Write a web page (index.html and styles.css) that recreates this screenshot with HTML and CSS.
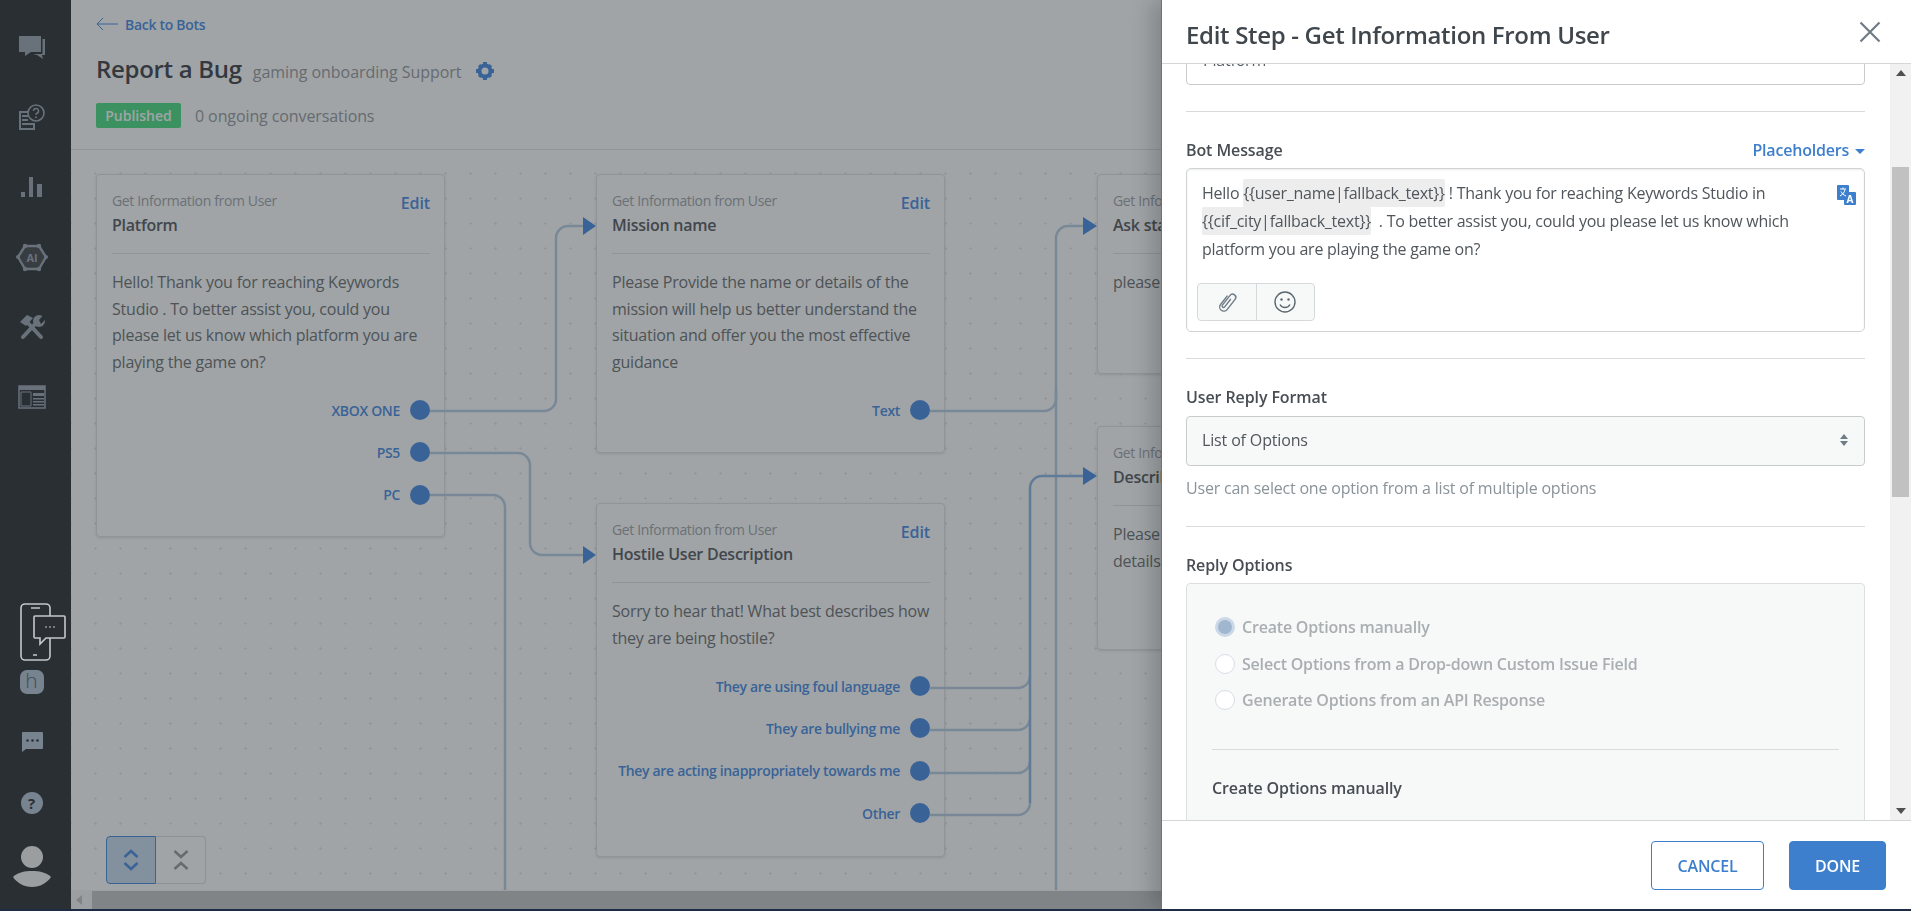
FILE: index.html
```html
<!DOCTYPE html>
<html lang="en">
<head>
  <meta charset="UTF-8">
  <title>Edit Step</title>
  <link rel="stylesheet" href="styles.css">
</head>
<body>

<div class="app">
  <!-- SIDEBAR -->
  <nav class="sidebar">
    <div class="nav-top">
      <a class="nav-item">
        <svg width="28" height="25" viewBox="0 0 28 25"><path d="M1 1h22v16H13l-6 4v-4H1z" fill="#a0a8b2"/><path d="M24.500 4H27v16h-3l1 4-6-4-4-1h9a1 1 0 0 0 .500-1z" fill="#a0a8b2"/></svg>
      </a>
      <a class="nav-item">
        <svg width="28" height="26" viewBox="0 0 28 26"><path d="M1 7h9v2H3v15h12v-3h2v5H1z" fill="#a0a8b2"/><path d="M4 11h6v2H4zM4 15h6v2H4zM4 19h13v2H4z" fill="#a0a8b2"/><circle cx="18" cy="9" r="8" fill="#353639" stroke="#a0a8b2" stroke-width="1.600"/><path d="M15.500 7a2.500 2.500 0 1 1 3.400 2.300c-.7.3-.9.7-.9 1.700" fill="none" stroke="#a0a8b2" stroke-width="1.500"/><circle cx="18" cy="13.300" r="1" fill="#a0a8b2"/></svg>
      </a>
      <a class="nav-item">
        <svg width="24" height="22" viewBox="0 0 24 22"><path d="M1 16h4v5H1zM9 1h4v20H9zM17 8h5v13h-5z" fill="#a0a8b2"/></svg>
      </a>
      <a class="nav-item">
        <svg width="32" height="29" viewBox="0 0 32 29"><path d="M9 3h14l7 11-7 12H9L2 14z" fill="#4d4e52" stroke="#a0a8b2" stroke-width="2.400" stroke-linejoin="round"/><circle cx="9" cy="3" r="2.200" fill="#a0a8b2"/><circle cx="23" cy="3" r="2.200" fill="#a0a8b2"/><circle cx="30" cy="14" r="2" fill="#a0a8b2"/><circle cx="2" cy="14" r="2" fill="#a0a8b2"/><circle cx="9" cy="26" r="2.200" fill="#a0a8b2"/><circle cx="23" cy="26" r="2.200" fill="#a0a8b2"/><text class="ai-text" x="16" y="18.500">AI</text></svg>
      </a>
      <a class="nav-item">
        <svg width="28" height="26" viewBox="0 0 28 26"><path d="M5 23 19 8M23 23 9 8" stroke="#a0a8b2" stroke-width="4" stroke-linecap="round"/><path d="M2 8l7-7 6 3-7 8z" fill="#a0a8b2"/><circle cx="21" cy="7" r="6" fill="#a0a8b2"/><path d="M21 6l6-7 3 4-7 7z" fill="#353639"/></svg>
      </a>
      <a class="nav-item">
        <svg width="28" height="24" viewBox="0 0 28 24"><path d="M1 1h26v22H1z" fill="none" stroke="#a0a8b2" stroke-width="1.500"/><path d="M1 1h26v4H1z" fill="#a0a8b2"/><path d="M3 7h10v14H3z" fill="#353639" stroke="#a0a8b2" stroke-width="1"/><path d="M15 8h11v3H15zM15 13h11v1.500H15zM15 16h11v1.500H15zM15 19h11v1.500H15z" fill="#a0a8b2"/></svg>
      </a>
    </div>
    <div class="nav-bottom">
      <div class="phone-widget">
        <svg width="46" height="58" viewBox="0 0 46 58"><rect x="1" y="1" width="29" height="56" rx="4" fill="none" stroke="#c4c8cc" stroke-width="1.600"/><path d="M11 5h9M13 52h4" stroke="#c4c8cc" stroke-width="1.600"/><path d="M15 13h29a1 1 0 0 1 1 1v20a1 1 0 0 1-1 1H26l-6 6v-6h-5a1 1 0 0 1-1-1V14a1 1 0 0 1 1-1z" fill="#2b2f34" stroke="#c4c8cc" stroke-width="1.600"/><path d="M25 24h2M29 24h2M33 24h2" stroke="#c4c8cc" stroke-width="1.200"/></svg>
      </div>
      <div class="h-badge">h</div>
      <div class="chat-mini">
        <svg width="22" height="22" viewBox="0 0 22 22"><path d="M2 1h19a1 1 0 0 1 1 1v15a1 1 0 0 1-1 1H5l-4 3V2a1 1 0 0 1 1-1z" fill="#b8c8d6"/><circle cx="6.500" cy="9.500" r="1.300" fill="#353639"/><circle cx="11.500" cy="9.500" r="1.300" fill="#353639"/><circle cx="16.500" cy="9.500" r="1.300" fill="#353639"/></svg>
      </div>
      <div class="help-badge">?</div>
      <div class="avatar">
        <svg width="40" height="42" viewBox="0 0 40 42"><circle cx="20" cy="11" r="11" fill="#f5f5f5"/><path d="M1 31c5-5 12-6 19-6s14 1 19 6c-4 6-11 10-19 10S5 37 1 31z" fill="#f5f5f5"/></svg>
      </div>
    </div>
  </nav>

  <div class="main">
    <header class="page-header">
      <a class="back-link">
        <svg width="22" height="14" viewBox="0 0 22 14"><path d="M22 7H1M7 1 1 7l6 6" fill="none" stroke="#4f8fe4" stroke-width="1"/></svg>
        Back to Bots
      </a>
      <div class="title-row">
        <h1>Report a Bug</h1>
        <span class="subtitle">gaming onboarding Support</span>
        <svg class="gear" width="18" height="18" viewBox="0 0 18 18"><circle cx="9" cy="9" r="5.500" fill="none" stroke="#4f8fe4" stroke-width="4"/><path d="M7 0h4v3H7zM7 15h4v3H7zM0 7h3v4H0zM15 7h3v4h-3zM2 4.200 4.200 2l2 2L4 6.200zM16 4.200 13.800 2l-2 2L14 6.200zM2 13.800 4.200 16l2-2L4 11.800zM16 13.800 13.800 16l-2-2 2.200-2.200z" fill="#4f8fe4"/></svg>
      </div>
      <div class="status-row">
        <span class="badge">Published</span>
        <span class="ongoing">0 ongoing conversations</span>
      </div>
    </header>

    <div class="canvas">
      <div class="card card-a">
        <div class="card-head">
          <div class="card-kind">Get Information from User</div>
          <div class="card-name">Platform</div>
          <a class="card-edit">Edit</a>
        </div>
        <p class="card-text">Hello! Thank you for reaching Keywords Studio . To better assist you, could you please let us know which platform you are playing the game on?</p>
        <div class="outs">
          <div class="out"><span>XBOX ONE</span><i></i></div>
          <div class="out"><span>PS5</span><i></i></div>
          <div class="out"><span>PC</span><i></i></div>
        </div>
      </div>

      <div class="card card-b">
        <div class="card-head">
          <div class="card-kind">Get Information from User</div>
          <div class="card-name">Mission name</div>
          <a class="card-edit">Edit</a>
        </div>
        <p class="card-text">Please Provide the name or details of the mission will help us better understand the situation and offer you the most effective guidance</p>
        <div class="outs">
          <div class="out"><span>Text</span><i></i></div>
        </div>
      </div>

      <div class="card card-c">
        <div class="card-head">
          <div class="card-kind">Get Information from User</div>
          <div class="card-name">Hostile User Description</div>
          <a class="card-edit">Edit</a>
        </div>
        <p class="card-text">Sorry to hear that! What best describes how they are being hostile?</p>
        <div class="outs">
          <div class="out"><span>They are using foul language</span><i></i></div>
          <div class="out"><span>They are bullying me</span><i></i></div>
          <div class="out"><span>They are acting inappropriately towards me</span><i></i></div>
          <div class="out"><span>Other</span><i></i></div>
        </div>
      </div>

      <div class="card card-d">
        <div class="card-head">
          <div class="card-kind">Get Information from User</div>
          <div class="card-name">Ask status</div>
        </div>
        <p class="card-text">please</p>
      </div>

      <div class="card card-e">
        <div class="card-head">
          <div class="card-kind">Get Information from User</div>
          <div class="card-name">Describe</div>
        </div>
        <p class="card-text">Please<br>details</p>
      </div>

      <!-- connectors, drawn in page coordinates -->
      <svg class="wires" width="1840" height="740" viewBox="71 150 1840 740">
        <g fill="none" stroke="#bccfe2" stroke-width="2.500">
          <path d="M430 411h114a12 12 0 0 0 12-12V238a12 12 0 0 1 12-12h16"/>
          <path d="M430 453h88a12 12 0 0 1 12 12v78a12 12 0 0 0 12 12h42"/>
          <path d="M430 495h63a12 12 0 0 1 12 12v383"/>
          <path d="M930 411h114a12 12 0 0 0 12-12V238a12 12 0 0 1 12-12h16"/>
          <path d="M1056 390v500"/>
          <path d="M930 688h88a12 12 0 0 0 12-12"/>
          <path d="M930 730h88a12 12 0 0 0 12-12"/>
          <path d="M930 773h88a12 12 0 0 0 12-12"/>
          <path d="M930 815h88a12 12 0 0 0 12-12"/>
        </g>
        <path d="M1030 803V488a12 12 0 0 1 12-12h42" fill="none" stroke="#90b8e6" stroke-width="2.500"/>
        <g fill="#4f8fe4">
          <path d="M583 217l13 9-13 9z"/>
          <path d="M583 546l13 9-13 9z"/>
          <path d="M1083 217l14 9-14 9z"/>
          <path d="M1083 467l14 9-14 9z"/>
        </g>
      </svg>

      <div class="view-toggle">
        <button class="toggle-btn on">
          <svg width="16" height="22" viewBox="0 0 16 22"><path d="M1.500 8 8 2l6.500 6M1.500 14 8 20l6.500-6" fill="none" stroke="#4f8fe4" stroke-width="2.500"/></svg>
        </button>
        <button class="toggle-btn">
          <svg width="16" height="22" viewBox="0 0 16 22"><path d="M1.500 2 8 8l6.500-6M1.500 20 8 14l6.500 6" fill="none" stroke="#9b9da1" stroke-width="2.500"/></svg>
        </button>
      </div>
    </div>

    <div class="h-scroll">
      <span class="h-arrow"></span>
      <div class="h-thumb"></div>
    </div>
  </div>
</div>

<div class="overlay"></div>

<!-- EDIT STEP PANEL -->
<aside class="panel">
  <div class="panel-head">
    <h2>Edit Step - Get Information From User</h2>
    <svg class="close" width="22" height="22" viewBox="0 0 22 22"><path d="M1.500 1.500l19 19M20.500 1.500l-19 19" stroke="#6f7b86" stroke-width="2.200"/></svg>
  </div>

  <div class="panel-mid">
    <div class="panel-body">
      <div class="text-input">Platform</div>
      <hr>

      <div class="label-row">
        <label>Bot Message</label>
        <a class="placeholders">Placeholders <b class="caret"></b></a>
      </div>
      <div class="msg-box">
        <svg class="translate" width="20" height="20" viewBox="0 0 20 20"><rect x="0" y="0" width="12" height="15" rx="1" fill="#3d7fcc"/><rect x="7" y="7" width="12" height="13" rx="1" fill="#3d7fcc"/><path d="M3 4h6M6 2.500V4M4 6.500c1 2 2.500 3.500 5 4.500M8 4.500c-.5 2.500-2 5-5 6.500" fill="none" stroke="#fff" stroke-width="1"/><text class="translate-a" x="13" y="18">A</text></svg>
        <div class="msg-text">Hello <span class="chip">{{user_name|fallback_text}}</span> ! Thank you for reaching Keywords Studio in <span class="chip">{{cif_city|fallback_text}}</span> &nbsp;. To better assist you, could you please let us know which platform you are playing the game on?</div>
        <div class="msg-tools">
          <button class="tool-btn">
            <svg width="26" height="26" viewBox="0 0 22 22"><path d="M8 6.500v9.500a3.500 3.500 0 0 0 7 0V5a2.700 2.700 0 0 0-5.400 0v10.500a1.200 1.200 0 0 0 2.400 0V7" transform="rotate(38 11 11)" fill="none" stroke="#6f7b86" stroke-width="1.200"/></svg>
          </button>
          <button class="tool-btn">
            <svg width="22" height="22" viewBox="0 0 22 22"><circle cx="11" cy="11" r="10" fill="none" stroke="#5d6871" stroke-width="1.400"/><circle cx="7.500" cy="8.500" r="1.200" fill="#5d6871"/><circle cx="14.500" cy="8.500" r="1.200" fill="#5d6871"/><path d="M6 13.500c1 2 3 3 5 3s4-1 5-3" fill="none" stroke="#5d6871" stroke-width="1.400"/></svg>
          </button>
        </div>
      </div>
      <hr class="after-msg">

      <label class="solo">User Reply Format</label>
      <div class="select-box">List of Options
        <svg width="10" height="14" viewBox="0 0 10 14"><path d="M5 1l4 5H1zM5 13 1 8h8z" fill="#6f7b86"/></svg>
      </div>
      <div class="help">User can select one option from a list of multiple options</div>
      <hr>

      <label class="solo">Reply Options</label>
      <div class="options-box">
        <div class="radio-row"><i class="radio checked"></i>Create Options manually</div>
        <div class="radio-row"><i class="radio"></i>Select Options from a Drop-down Custom Issue Field</div>
        <div class="radio-row"><i class="radio"></i>Generate Options from an API Response</div>
        <hr class="inner">
        <label class="solo">Create Options manually</label>
      </div>
    </div>

    <div class="v-scroll">
      <span class="v-up"></span>
      <div class="v-thumb"></div>
      <span class="v-down"></span>
    </div>
  </div>

  <div class="panel-foot">
    <button class="btn-outline">CANCEL</button>
    <button class="btn-fill">DONE</button>
  </div>
</aside>

<div class="edge-strip"></div>

</body>
</html>
```

FILE: styles.css
```css
* { box-sizing: border-box; }
html, body { height: 100%; }
body {
  margin: 0; overflow: hidden;
  font-family: "Open Sans", "Liberation Sans", sans-serif;
  font-size: 16px; background: #fff; color: #737474;
}

.app { display: flex; height: 909px; }

/* sidebar */
.sidebar {
  width: 71px; flex: none; padding-right: 8px;
  display: flex; flex-direction: column; justify-content: space-between;
  background: #353639;
}
.nav-top { padding-top: 12px; }
.nav-item { display: flex; height: 70px; align-items: center; justify-content: center; }
.ai-text { font: 700 11px "Open Sans", sans-serif; fill: #a0a8b2; text-anchor: middle; }
.nav-bottom { display: flex; flex-direction: column; align-items: center; padding-bottom: 21px; }
.phone-widget { position: relative; z-index: 20; width: 46px; height: 58px; margin-left: 21px; margin-right: -2px; }
.h-badge {
  width: 24px; height: 24px; margin-top: 9px; border-radius: 7px;
  background: #b8c8d6; color: #5d6871;
  font-size: 21px; line-height: 20px; text-align: center; font-weight: 300;
}
.chat-mini { height: 22px; margin-top: 37px; }
.help-badge {
  width: 22px; height: 22px; margin-top: 39px; border-radius: 50%;
  background: #b8c8d6; color: #353639;
  font-size: 15px; font-weight: 700; line-height: 22px; text-align: center;
}
.avatar { height: 42px; margin-top: 32px; }

/* main */
.main { flex: 1; min-width: 0; display: flex; flex-direction: column; }
.page-header { height: 150px; padding: 13px 0 0 25px; border-bottom: 1px solid #e1e4e4; }
.back-link { display: flex; align-items: center; gap: 7px; height: 22px; color: #4f8fe4; font-size: 14px; font-weight: 600; letter-spacing: -.3px; }
.title-row { display: flex; align-items: baseline; margin-top: 17px; height: 30px; }
.title-row h1 { margin: 0; font-size: 24px; font-weight: 600; color: #45454c; letter-spacing: -.3px; }
.subtitle { margin-left: 11px; font-size: 16px; color: #9b9da1; letter-spacing: -.05px; }
.gear { align-self: center; margin: 8px 0 0 15px; }
.status-row { display: flex; align-items: center; margin-top: 21px; }
.badge {
  width: 85px; height: 25px; border-radius: 2px;
  background: #54de85; color: #fff;
  font-size: 14px; font-weight: 600; line-height: 25px; text-align: center;
}
.ongoing { margin-left: 14px; font-size: 16px; color: #9b9da1; letter-spacing: -.1px; }

.canvas {
  position: relative; flex: 1; overflow: hidden;
  background-color: #fff;
  background-image: radial-gradient(circle, #e8e8ea 1px, transparent 1.200px);
  background-size: 25px 25px;
  background-position: -63px -139px;
}

/* diagram nodes */
.card {
  position: absolute; width: 349px; padding: 14px 14px 14px 15px;
  background: #fff; border: 1px solid #e1e4e4; border-radius: 4px;
  box-shadow: 0 1px 3px rgba(0, 0, 0, 0.12);
}
.card-a { left: 25px; top: 24px; height: 363px; }
.card-b { left: 525px; top: 24px; height: 279px; }
.card-c { left: 525px; top: 353px; height: 354px; }
.card-d { left: 1026px; top: 24px; height: 200px; }
.card-e { left: 1026px; top: 276px; height: 224px; }
.card-head { position: relative; height: 65px; border-bottom: 1px solid #e1e4e4; }
.card-kind { height: 24px; font-size: 14px; line-height: 24px; color: #a5a7aa; letter-spacing: -.36px; }
.card-name { height: 24px; font-size: 16px; font-weight: 600; line-height: 24px; color: #5c5d62; letter-spacing: -.25px; }
.card-edit { position: absolute; right: 0; top: 2px; font-size: 16px; font-weight: 600; line-height: 24px; color: #4f8fe4; letter-spacing: -.1px; }
.card-text { margin: 15px 0 0; font-size: 16px; line-height: 26.500px; color: #737474; letter-spacing: -.22px; }
.outs { margin-top: 14px; }
.out { display: flex; height: 42.300px; align-items: center; justify-content: flex-end; gap: 10px; color: #4f8fe4; font-size: 14px; font-weight: 600; letter-spacing: -.32px; }
.out i { width: 20px; height: 20px; border-radius: 50%; background: #4f8fe4; }

.wires { position: absolute; left: 0; top: 0; pointer-events: none; }

.view-toggle { position: absolute; left: 35px; top: 686px; display: flex; }
.toggle-btn {
  width: 50px; height: 48px; padding: 0; background: #fff;
  display: flex; align-items: center; justify-content: center;
  border: 1px solid #dcdfe1; border-left: none; border-radius: 0 4px 4px 0;
}
.toggle-btn.on { background: #cddcf0; border: 1px solid #4f8fe4; border-radius: 4px 0 0 4px; }

.h-scroll { display: flex; flex: none; align-items: center; height: 19px; background: #f6f6f7; }
.h-arrow { width: 0; height: 0; margin: 0 5px; border: 5px solid transparent; border-left: none; border-right: 6px solid #c8c8c8; }
.h-thumb { flex: 1; height: 18px; margin-left: 5px; background: #c8c8c8; }

.overlay { position: fixed; inset: 0; z-index: 10; background: rgba(29, 38, 45, 0.42); }

/* edit panel */
.panel {
  position: fixed; top: 0; right: 0; z-index: 11;
  width: 750px; height: 909px;
  display: flex; flex-direction: column;
  background: #fff; border-left: 1px solid #6f7376;
  box-shadow: -10px 0 20px rgba(0, 0, 0, 0.18);
}
.panel-head {
  flex: none; height: 64px; padding: 0 30px 0 24px;
  display: flex; align-items: center; justify-content: space-between;
  border-bottom: 1px solid #d4d6d8;
}
.panel-head h2 { margin: 5px 0 0; font-size: 24px; font-weight: 600; color: #3f464c; letter-spacing: -.32px; }
.panel-mid { flex: 1; min-height: 0; display: flex; }
.panel-body { flex: 1; min-width: 0; overflow: hidden; padding: 0 25px 0 24px; }

hr { height: 1px; margin: 26px 0 0; border: none; background: #d8dadc; }
hr.after-msg { margin-top: 26px; }
hr.inner { margin-top: 30px; }
label { display: block; font-weight: 600; color: #474d53; }
label, .label-row { height: 20px; font-size: 16px; line-height: 21px; letter-spacing: -.1px; }
.label-row { display: flex; justify-content: space-between; margin-top: 28px; }
label.solo { margin-top: 28px; }
.placeholders { color: #3d7fcc; font-weight: 600; letter-spacing: -.2px; }
.caret { display: inline-block; margin-left: 2px; vertical-align: 2px; border: 5px solid transparent; border-bottom: none; border-top: 5px solid #3d7fcc; }

.text-input {
  height: 49px; margin-top: -28px; padding: 0 16px;
  border: 1px solid #c9cccf; border-radius: 4px;
  line-height: 47px; color: #555c62; letter-spacing: -.2px;
}
.msg-box {
  position: relative; height: 164px; margin-top: 8px; padding: 10px 10px 0;
  border: 1px solid #d0d3d5; border-radius: 5px;
  box-shadow: inset 0 1px 2px rgba(0, 0, 0, 0.08);
}
.msg-text { width: 640px; height: 84px; padding-left: 5px; line-height: 28px; color: #50565b; letter-spacing: -.24px; }
.chip { padding: 3px 0; background: #ededed; border-radius: 2px; }
.translate { position: absolute; right: 7px; top: 16px; }
.translate-a { font: 700 10px "Open Sans", sans-serif; fill: #fff; text-anchor: middle; }
.msg-tools { display: flex; width: 118px; height: 38px; margin-top: 20px; border: 1px solid #d6d9db; border-radius: 4px; background: #f7f9f9; overflow: hidden; }
.tool-btn { flex: 1; padding: 0; border: none; background: none; display: flex; align-items: center; justify-content: center; }
.tool-btn + .tool-btn { border-left: 1px solid #d6d9db; }

.select-box {
  display: flex; height: 50px; margin-top: 9px; padding: 0 15px 2px;
  align-items: center; justify-content: space-between;
  background: #f7f9f9; border: 1px solid #c9cccf; border-radius: 4px;
  color: #50565b; letter-spacing: -.15px;
}
.help { height: 20px; margin-top: 12px; line-height: 20px; color: #8a9399; letter-spacing: -.2px; }
.help + hr { margin-top: 28px; }

.options-box {
  height: 400px; margin-top: 8px; padding: 25px 25px 0;
  background: #f7f9f9; border: 1px solid #dcdfe1; border-radius: 4px;
}
.radio-row { display: flex; height: 36.500px; padding-left: 3px; gap: 7px; align-items: center; font-weight: 600; color: #a9aeb1; letter-spacing: -.2px; }
.radio { width: 20px; height: 20px; border-radius: 50%; background: #fff; border: 1px solid #d7dee6; }
.radio.checked { border: 3px solid #cbd8e6; background: #a1b6cf; }

.v-scroll { position: relative; flex: none; width: 21px; background: #f1f1f1; }
.v-thumb { position: absolute; left: 2px; right: 2px; top: 103px; height: 330px; background: #c1c1c1; }
.v-up, .v-down { position: absolute; left: 6px; width: 0; height: 0; border: 5px solid transparent; }
.v-up { top: 6px; border-top: none; border-bottom: 6px solid #505050; }
.v-down { bottom: 6px; border-bottom: none; border-top: 6px solid #505050; }

.panel-foot { flex: none; display: flex; height: 89px; padding: 20px 25px 0 0; justify-content: flex-end; gap: 25px; border-top: 1px solid #d4d6d8; }
.panel-foot button { height: 49px; border-radius: 4px; font-family: inherit; font-size: 16px; font-weight: 600; letter-spacing: -.2px; }
.btn-outline { width: 113px; background: #fff; border: 1px solid #3d7fcc; color: #3d7fcc; }
.btn-fill { width: 97px; background: #3d7fcc; border: 1px solid #3d7fcc; color: #fff; }
.close { flex: none; }

.edge-strip { position: fixed; left: 0; right: 0; bottom: 0; z-index: 30; height: 2px; background: #1e2b45; }
```
